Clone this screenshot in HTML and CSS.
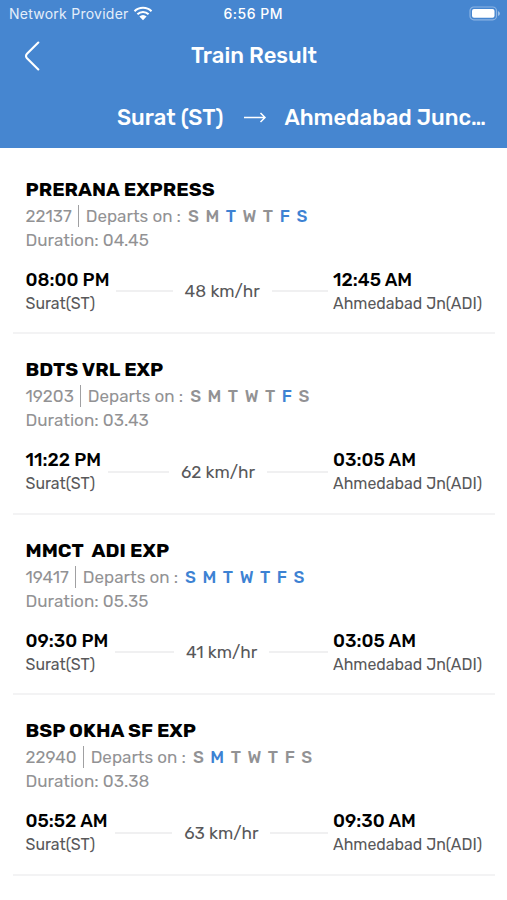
FILE: index.html
```html
<!DOCTYPE html>
<html lang="en">
    <head>
        <meta charset="utf-8">
        <title>Train Result</title>
        <link rel="stylesheet" href="styles.css">
    </head>
    <body>
        <header class="header">
            <div class="status">
                <span class="carrier">Network Provider</span>
                <svg class="wifi" viewBox="0 0 20 15" width="20" height="15">
                    <path d="M1.5 5.2a12.2 12.2 0 0 1 17 0M4.4 8.3a8 8 0 0 1 11.2 0" fill="none" stroke="#fff" stroke-width="2.1"/>
                    <path d="M6.4 10.6a5 5 0 0 1 7.2 0L10 14.2z" fill="#fff"/>
                </svg>
                <span class="clock">6:56 PM</span>
                <svg class="battery" viewBox="0 0 32 15" width="32" height="15">
                    <rect x="1" y="1" width="26.5" height="12.8" rx="3.8" fill="none" stroke="#8cb4e3" stroke-width="1.2"/>
                    <rect x="3" y="3" width="22.5" height="8.8" rx="2" fill="#fff"/>
                    <path d="M29 5v5q2-1 2-2.500t-2-2.500z" fill="#9dc0e8"/>
                </svg>
            </div>
            <div class="titlebar">
                <svg class="back" viewBox="0 0 18 32" width="18" height="32">
                    <path d="M14.300 2.500L3 13.800q-2 2.200 0 4.400L14.300 29.500" fill="none" stroke="#fff" stroke-width="2.100" stroke-linecap="round"/>
                </svg>
                <h1 class="title">Train Result</h1>
            </div>
            <div class="route">
                <span class="from">Surat (ST)</span>
                <svg class="arrow" viewBox="0 0 24 12" width="24" height="12">
                    <path d="M1 6.500h21M17.500 2L22 6.500 17.500 11" fill="none" stroke="#fff" stroke-width="1.500"/>
                </svg>
                <span class="to">Ahmedabad Junc…</span>
            </div>
        </header>
        <main>
            <section class="train">
                <h2 class="name">PRERANA EXPRESS</h2>
                <div class="meta"><span class="number">22137</span><span class="bar"></span><span class="departs">Departs on :</span>
                    <div class="days"><b>S</b><b>M</b><b class="on">T</b><b>W</b><b>T</b><b class="on">F</b><b class="on">S</b></div>
                </div>
                <div class="duration">Duration: 04.45</div>
                <div class="trip">
                    <div class="stop"><div class="time">08:00 PM</div><div class="station">Surat(ST)</div></div>
                    <div class="middle"><i class="line"></i><span class="speed">48 km/hr</span><i class="line"></i></div>
                    <div class="stop end"><div class="time">12:45 AM</div><div class="station">Ahmedabad Jn(ADI)</div></div>
                </div>
            </section>
            <section class="train">
                <h2 class="name">BDTS VRL EXP</h2>
                <div class="meta"><span class="number">19203</span><span class="bar"></span><span class="departs">Departs on :</span>
                    <div class="days"><b>S</b><b>M</b><b>T</b><b>W</b><b>T</b><b class="on">F</b><b>S</b></div>
                </div>
                <div class="duration">Duration: 03.43</div>
                <div class="trip">
                    <div class="stop"><div class="time">11:22 PM</div><div class="station">Surat(ST)</div></div>
                    <div class="middle"><i class="line"></i><span class="speed">62 km/hr</span><i class="line"></i></div>
                    <div class="stop end"><div class="time">03:05 AM</div><div class="station">Ahmedabad Jn(ADI)</div></div>
                </div>
            </section>
            <section class="train">
                <h2 class="name">MMCT&nbsp; ADI EXP</h2>
                <div class="meta"><span class="number">19417</span><span class="bar"></span><span class="departs">Departs on :</span>
                    <div class="days"><b class="on">S</b><b class="on">M</b><b class="on">T</b><b class="on">W</b><b class="on">T</b><b class="on">F</b><b class="on">S</b></div>
                </div>
                <div class="duration">Duration: 05.35</div>
                <div class="trip">
                    <div class="stop"><div class="time">09:30 PM</div><div class="station">Surat(ST)</div></div>
                    <div class="middle"><i class="line"></i><span class="speed">41 km/hr</span><i class="line"></i></div>
                    <div class="stop end"><div class="time">03:05 AM</div><div class="station">Ahmedabad Jn(ADI)</div></div>
                </div>
            </section>
            <section class="train">
                <h2 class="name">BSP OKHA SF EXP</h2>
                <div class="meta"><span class="number">22940</span><span class="bar"></span><span class="departs">Departs on :</span>
                    <div class="days"><b>S</b><b class="on">M</b><b>T</b><b>W</b><b>T</b><b>F</b><b>S</b></div>
                </div>
                <div class="duration">Duration: 03.38</div>
                <div class="trip">
                    <div class="stop"><div class="time">05:52 AM</div><div class="station">Surat(ST)</div></div>
                    <div class="middle"><i class="line"></i><span class="speed">63 km/hr</span><i class="line"></i></div>
                    <div class="stop end"><div class="time">09:30 AM</div><div class="station">Ahmedabad Jn(ADI)</div></div>
                </div>
            </section>
        </main>
    </body>
</html>
```

FILE: styles.css
```css
*{box-sizing: border-box;}
body{margin: 0; background: #fff; font-family: Rubik, Roboto, sans-serif; white-space: nowrap; height: 900px; overflow: hidden;}
h1, h2{margin: 0;}
svg{display: block; flex: none;}

.header{height: 147.500px; background: #4686d0; color: #fff;}
.status{height: 27px; display: grid; grid-template-columns: 124px 20px 1fr 32px; align-items: center; padding: 0 6px 0 9px; font-family: Inter, sans-serif; font-size: 14px;}
.carrier{letter-spacing: 0.25px; color: #e4eefa;}
.clock{justify-self: start; margin-left: 70.500px; font-weight: 500; font-size: 14px; letter-spacing: 0.5px;}
.titlebar{height: 57px; display: grid; grid-template-columns: 1fr auto 1fr; align-items: center; padding-left: 24px; padding-right: 23px;}
.title{font-size: 22px; font-weight: 500;}
.route{display: flex; align-items: center; justify-content: flex-end; height: 66px; padding-right: 20.500px; font-size: 22px; font-weight: 500;}
.from{width: 107.500px;}
.arrow{margin: 0 18px 0 18px;}
.to{width: 202px;}

main{padding-top: 6px;}
.train{height: 180.500px; margin: 0 12px 0 13px; padding: 23px 0 0 12.500px; border-bottom: 2.500px solid #f3f3f4;}
.name{font-size: 19.500px; font-weight: 700; line-height: 26px; color: #000;}
.meta{display: flex; align-items: center; height: 26px; font-size: 17px; color: #929294;}
.bar{width: 1px; height: 22px; background: #a0a0a2; margin: 0 6.500px 0 6.500px;}
.days{display: flex; gap: 6.500px; margin-left: 7px;}
.days b{font-weight: 500;}
.days .on{color: #3d82d3;}
.duration{font-size: 17.100px; line-height: 23px; color: #929294;}
.trip{display: flex; margin-top: 17.300px;}
.stop{flex: none;}
.end{width: 162px;}
.time{font-size: 18.250px; line-height: 23px; font-weight: 500; color: #000;}
.station{font-size: 15.900px; line-height: 23px; color: #58585a;}
.middle{flex: 1; display: flex; align-items: center; height: 45px; padding: 0 5px 0 7px;}
.line{flex: 1; height: 2px; background: #f0f0f1;}
.speed{margin: 0 12px; font-size: 17.200px; color: #58585a;}
```
